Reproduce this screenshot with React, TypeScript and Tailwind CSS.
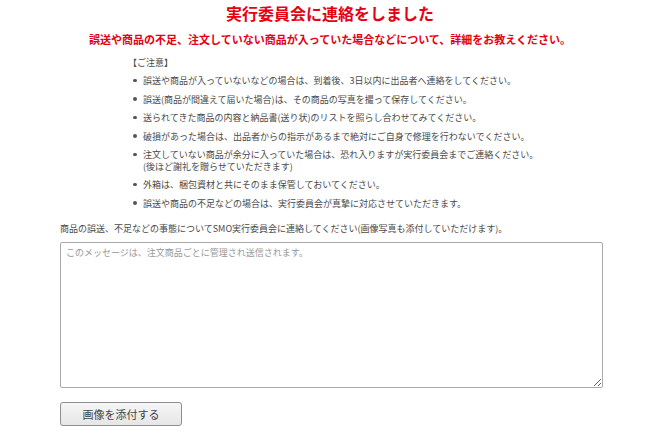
import React, { useState } from "react";

const notes: string[][] = [
  ["誤送や商品が入っていないなどの場合は、到着後、3日以内に出品者へ連絡をしてください。"],
  ["誤送(商品が間違えて届いた場合)は、その商品の写真を撮って保存してください。"],
  ["送られてきた商品の内容と納品書(送り状)のリストを照らし合わせてみてください。"],
  ["破損があった場合は、出品者からの指示があるまで絶対にご自身で修理を行わないでください。"],
  [
    "注文していない商品が余分に入っていた場合は、恐れ入りますが実行委員会までご連絡ください。",
    "(後ほど謝礼を贈らせていただきます)",
  ],
  ["外箱は、梱包資材と共にそのまま保管しておいてください。"],
  ["誤送や商品の不足などの場合は、実行委員会が真摯に対応させていただきます。"],
];

export default function App() {
  const [message, setMessage] = useState("");

  return (
    <div
      className="w-[660px] h-[440px] bg-white overflow-hidden text-[#4a4a4a]"
      style={{ fontFamily: '"Noto Sans CJK JP", "Liberation Sans", sans-serif' }}
    >
      {/* Header */}
      <h1 className="text-center text-[16px] leading-[26px] font-bold text-[#e50012]">
        実行委員会に連絡をしました
      </h1>
      <p className="mt-[7px] text-center text-[11px] leading-[12px] font-bold text-[#e50012]">
        誤送や商品の不足、注文していない商品が入っていた場合などについて、詳細をお教えください。
      </p>

      <div className="pl-[60px] pr-[57px]">
        {/* Notes */}
        <div className="ml-[68px] mt-[12px] text-[9px] leading-[11px]">
          <p>【ご注意】</p>
          <ul className="mt-[7px] flex flex-col gap-[7px]">
            {notes.map((lines, i) => (
              <li key={i} className="flex">
                <span className="w-[15px] h-[11px] shrink-0 flex items-center pl-[5px]">
                  <span className="w-[3.5px] h-[3.5px] rounded-full bg-[#555]" />
                </span>
                <span>
                  {lines.map((l, j) => (
                    <span key={j} className="block leading-[11.5px]">
                      {l}
                    </span>
                  ))}
                </span>
              </li>
            ))}
          </ul>
        </div>

        {/* Message form */}
        <p className="mt-[14px] text-[9px] leading-[11px]">
          商品の誤送、不足などの事態についてSMO実行委員会に連絡してください(画像写真も添付していただけます)。
        </p>
        <textarea
          value={message}
          onChange={(e) => setMessage(e.target.value)}
          placeholder="このメッセージは、注文商品ごとに管理され送信されます。"
          className="mt-[8px] block w-full h-[146px] border border-[#a9a9a9] rounded-[2px] px-[5px] py-[4px] text-[9px] leading-[12px] text-[#333] placeholder:text-[#999] focus:outline-none"
        />
        <button
          type="button"
          className="mt-[14px] w-[122px] h-[24px] rounded-[3px] border border-[#8f8f8f] bg-gradient-to-b from-[#f6f6f6] to-[#e6e6e6] text-[11px] text-[#444]"
        >
          画像を添付する
        </button>
      </div>
    </div>
  );
}
